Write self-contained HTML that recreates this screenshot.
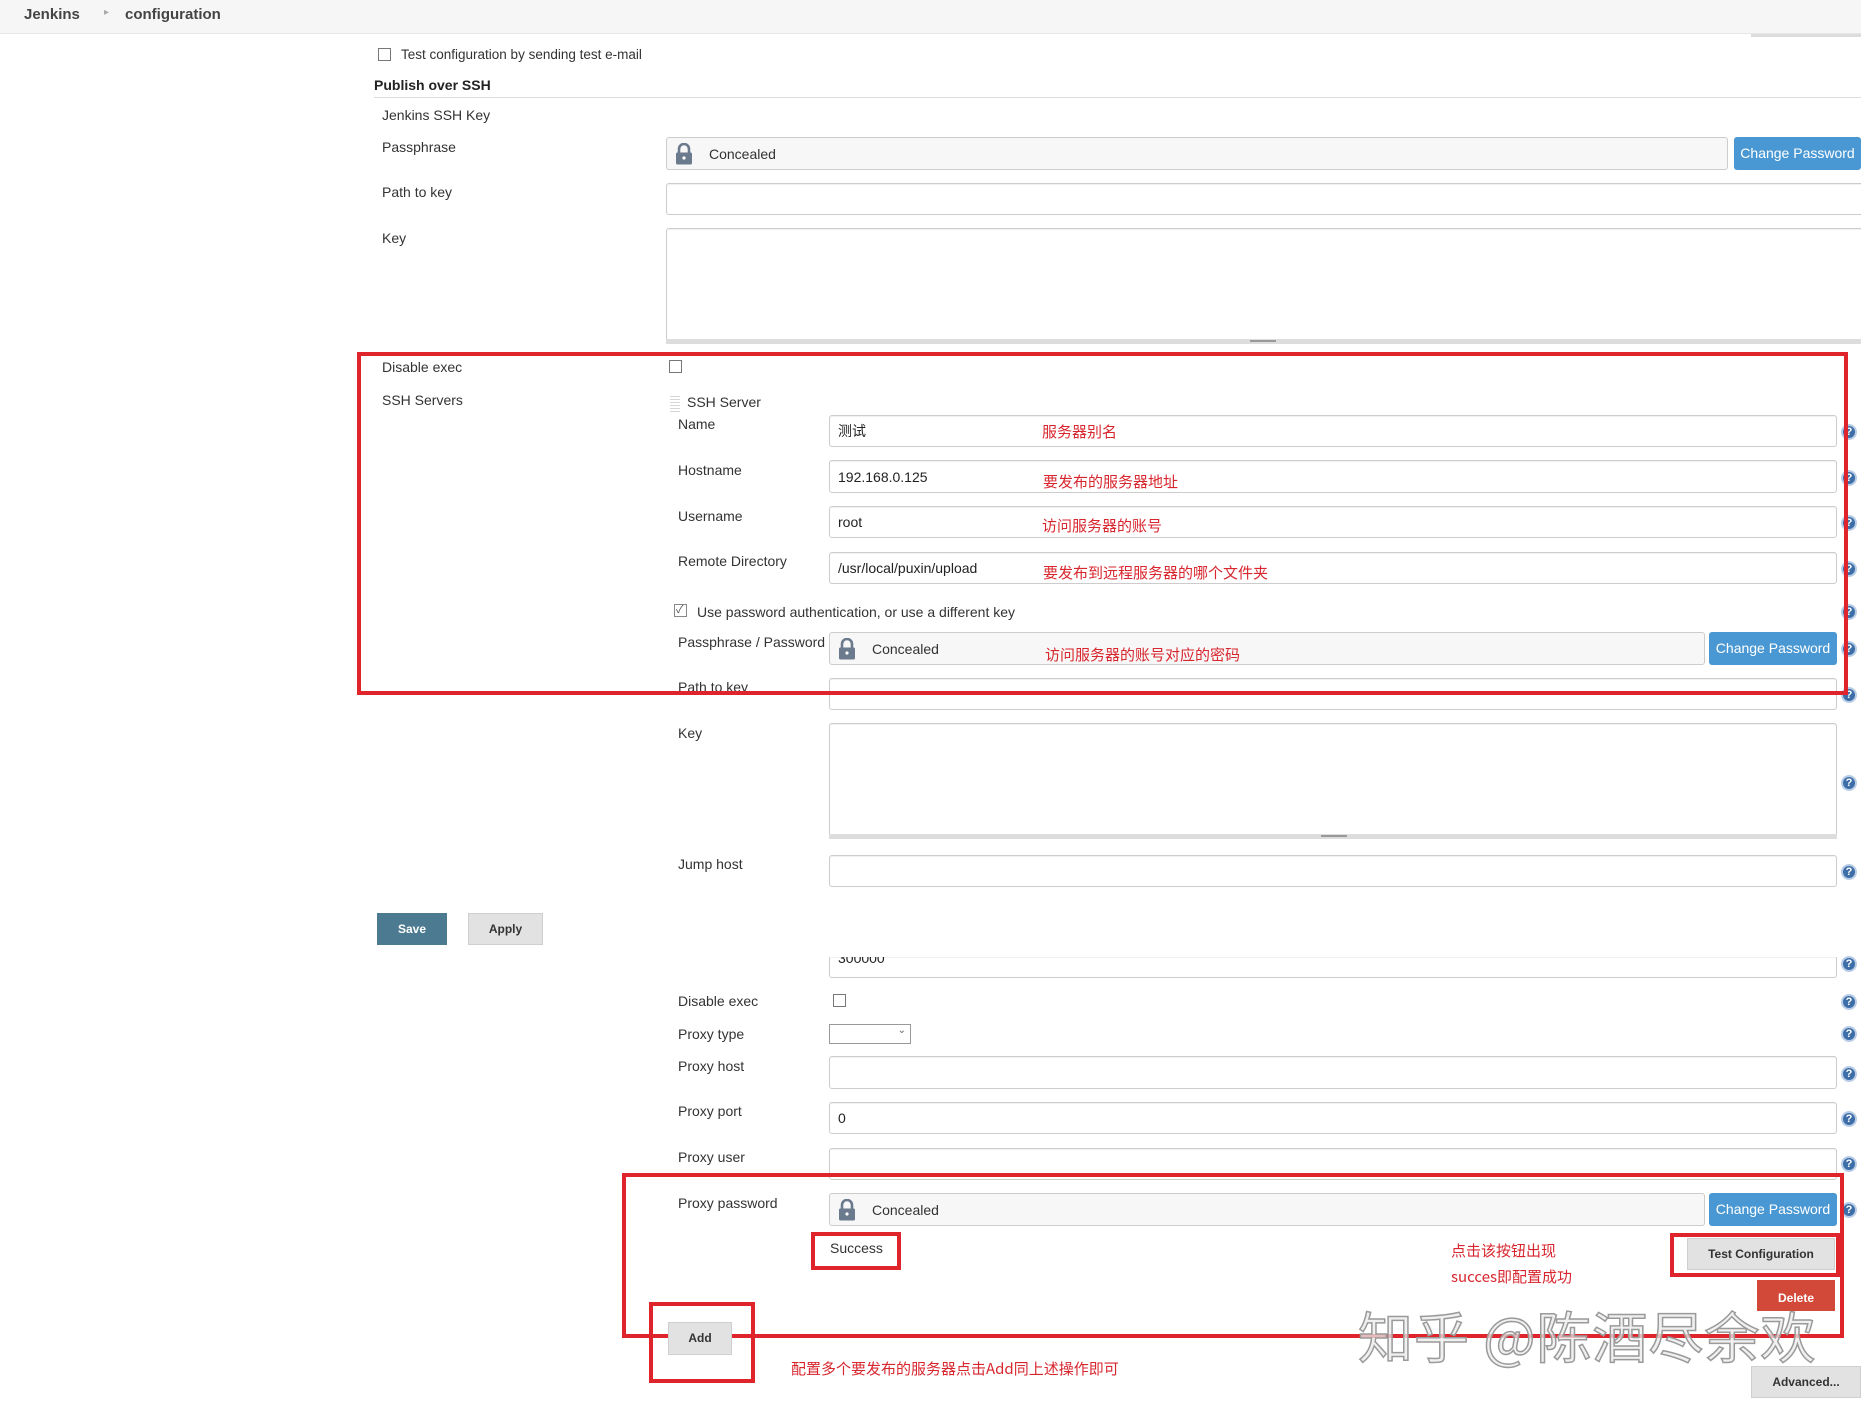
<!DOCTYPE html>
<html><head><meta charset="utf-8">
<style>
*{box-sizing:border-box;margin:0;padding:0}
body{width:1861px;height:1403px;background:#fff;position:relative;overflow:hidden;font-family:"Liberation Sans","Noto Sans CJK SC",sans-serif;font-size:14px;color:#333}
.a{position:absolute;white-space:nowrap}
.lbl{position:absolute;white-space:nowrap;font-size:14px;color:#333;line-height:16px}
.inp{position:absolute;border:1px solid #ccc;border-radius:3px;background:#fff;box-shadow:inset 0 1px 1px rgba(0,0,0,.06)}
.inp span{position:absolute;left:8px;top:50%;transform:translateY(-50%);font-size:14px;color:#222}
.conc{position:absolute;border:1px solid #ccc;border-radius:3px;background:#f7f7f7}
.conc span{position:absolute;left:42px;top:50%;transform:translateY(-50%);color:#333}
.lock{position:absolute;left:8px;top:50%;transform:translateY(-50%);width:18px;height:22px}
.cpb{position:absolute;background:#4a98d3;color:#fff;border-radius:3px;font-size:14px;text-align:center}
.cb{position:absolute;width:13px;height:13px;border:1px solid #777;background:#fff}
.help{position:absolute;width:16px;height:16px;border-radius:50%;background:#3d6ea8;border:2px solid #b9cde6;color:#fff;font-size:11px;font-weight:bold;text-align:center;line-height:12px}
.red{position:absolute;border:4px solid #e0242b}
.ann{position:absolute;white-space:nowrap;color:#d8262e;font-size:15px;font-family:"Noto Sans CJK SC","Liberation Sans",sans-serif}
.gb{position:absolute;background:#e2e2e2;border:1px solid #cfcfcf;color:#333;font-weight:bold;font-size:12px;text-align:center}
</style></head><body>
<div class="a" style="left:0;top:0;width:1861px;height:34px;background:#f6f6f6;border-bottom:1px solid #e6e6e6"></div>
<div class="a" style="left:24px;top:6px;font-weight:bold;font-size:15px;color:#444">Jenkins</div>
<div class="a" style="left:104px;top:7px;font-size:10px;color:#aaa">&#9656;</div>
<div class="a" style="left:125px;top:6px;font-weight:bold;font-size:15px;color:#444">configuration</div>
<div class="a" style="left:1751px;top:34px;width:110px;height:3px;background:#ddd"></div>

<div class="cb" style="left:378px;top:48px"></div>
<div class="lbl" style="left:401px;top:47px;font-size:13.5px">Test configuration by sending test e-mail</div>
<div class="lbl" style="left:374px;top:77px;font-weight:bold;font-size:14px;color:#222">Publish over SSH</div>
<div class="a" style="left:374px;top:97px;width:1487px;height:1px;background:#ddd"></div>
<div class="lbl" style="left:382px;top:107px">Jenkins SSH Key</div>
<div class="lbl" style="left:382px;top:139px">Passphrase</div>
<div class="lbl" style="left:382px;top:184px">Path to key</div>
<div class="lbl" style="left:382px;top:230px">Key</div>

<div class="conc" style="left:666px;top:137px;width:1062px;height:33px"><svg class="lock" viewBox="0 0 18 22"><path d="M4 10V6a5 5 0 0 1 10 0v4" fill="none" stroke="#6b7a8c" stroke-width="2.6"/><rect x="1" y="9.5" width="16" height="12" rx="1.5" fill="#6b7a8c"/><circle cx="9" cy="15" r="1.6" fill="#fff"/></svg><span>Concealed</span></div>
<div class="cpb" style="left:1734px;top:137px;width:127px;height:33px;line-height:33px">Change Password</div>
<div class="inp" style="left:666px;top:183px;width:1200px;height:32px"></div>
<div class="inp" style="left:666px;top:228px;width:1200px;height:115px"></div>
<div class="a" style="left:666px;top:339px;width:1200px;height:5px;background:#ddd"></div>
<div class="a" style="left:1250px;top:340px;width:26px;height:2px;border-top:1px solid #999;border-bottom:1px solid #999"></div>

<div class="lbl" style="left:382px;top:359px">Disable exec</div>
<div class="cb" style="left:669px;top:360px"></div>
<div class="lbl" style="left:382px;top:392px">SSH Servers</div>
<div class="a" style="left:670px;top:394px;width:10px;height:18px;background:repeating-linear-gradient(0deg,#ccc 0 1px,transparent 1px 3px),#fff;opacity:.8"></div>
<div class="lbl" style="left:687px;top:394px">SSH Server</div>

<div class="lbl" style="left:678px;top:416px">Name</div>
<div class="lbl" style="left:678px;top:462px">Hostname</div>
<div class="lbl" style="left:678px;top:508px">Username</div>
<div class="lbl" style="left:678px;top:553px">Remote Directory</div>
<div class="cb" style="left:674px;top:604px;border-color:#888"></div><div class="a" style="left:676px;top:601px;font-size:11px;color:#555">&#10003;</div>
<div class="lbl" style="left:697px;top:604px">Use password authentication, or use a different key</div>
<div class="lbl" style="left:678px;top:634px">Passphrase / Password</div>
<div class="lbl" style="left:678px;top:679px">Path to key</div>
<div class="lbl" style="left:678px;top:725px">Key</div>
<div class="lbl" style="left:678px;top:856px">Jump host</div>

<div class="inp" style="left:829px;top:415px;width:1008px;height:32px"><span>测试</span></div>
<div class="inp" style="left:829px;top:460px;width:1008px;height:33px"><span>192.168.0.125</span></div>
<div class="inp" style="left:829px;top:506px;width:1008px;height:32px"><span>root</span></div>
<div class="inp" style="left:829px;top:552px;width:1008px;height:32px"><span>/usr/local/puxin/upload</span></div>
<div class="conc" style="left:829px;top:632px;width:876px;height:33px"><svg class="lock" viewBox="0 0 18 22"><path d="M4 10V6a5 5 0 0 1 10 0v4" fill="none" stroke="#6b7a8c" stroke-width="2.6"/><rect x="1" y="9.5" width="16" height="12" rx="1.5" fill="#6b7a8c"/><circle cx="9" cy="15" r="1.6" fill="#fff"/></svg><span>Concealed</span></div>
<div class="cpb" style="left:1709px;top:632px;width:128px;height:33px;line-height:33px">Change Password</div>
<div class="inp" style="left:829px;top:678px;width:1008px;height:32px"></div>
<div class="inp" style="left:829px;top:723px;width:1008px;height:114px"></div>
<div class="a" style="left:829px;top:834px;width:1008px;height:5px;background:#ddd"></div>
<div class="a" style="left:1321px;top:835px;width:26px;height:2px;border-top:1px solid #999;border-bottom:1px solid #999"></div>
<div class="inp" style="left:829px;top:855px;width:1008px;height:32px"></div>

<div class="help" style="left:1841px;top:424px">?</div>
<div class="help" style="left:1841px;top:470px">?</div>
<div class="help" style="left:1841px;top:515px">?</div>
<div class="help" style="left:1841px;top:561px">?</div>
<div class="help" style="left:1841px;top:604px">?</div>
<div class="help" style="left:1841px;top:641px">?</div>
<div class="help" style="left:1841px;top:687px">?</div>
<div class="help" style="left:1841px;top:775px">?</div>
<div class="help" style="left:1841px;top:864px">?</div>

<div class="ann" style="left:1042px;top:421px">服务器别名</div>
<div class="ann" style="left:1043px;top:471px">要发布的服务器地址</div>
<div class="ann" style="left:1042px;top:515px">访问服务器的账号</div>
<div class="ann" style="left:1043px;top:562px">要发布到远程服务器的哪个文件夹</div>
<div class="ann" style="left:1045px;top:644px">访问服务器的账号对应的密码</div>

<div class="red" style="left:357px;top:352px;width:1491px;height:343px"></div>

<div class="a" style="left:377px;top:913px;width:70px;height:32px;background:#4b7a91;color:#fff;font-weight:bold;font-size:12px;text-align:center;line-height:32px">Save</div>
<div class="gb" style="left:468px;top:913px;width:75px;height:32px;line-height:30px">Apply</div>

<!-- second part -->
<div class="inp" style="left:829px;top:957px;width:1008px;height:21px;border-top:none;border-radius:0 0 3px 3px;overflow:hidden"><div style="position:absolute;left:8px;top:-7px;font-size:14px;color:#222">300000</div></div>
<div class="help" style="left:1841px;top:956px">?</div>
<div class="lbl" style="left:678px;top:993px">Disable exec</div>
<div class="cb" style="left:833px;top:994px"></div>
<div class="lbl" style="left:678px;top:1026px">Proxy type</div>
<div class="a" style="left:829px;top:1024px;width:82px;height:20px;border:1px solid #999;background:#fff"><span style="position:absolute;right:4px;top:0;font-size:10px;color:#666">&#8964;</span></div>
<div class="lbl" style="left:678px;top:1058px">Proxy host</div>
<div class="lbl" style="left:678px;top:1103px">Proxy port</div>
<div class="lbl" style="left:678px;top:1149px">Proxy user</div>
<div class="lbl" style="left:678px;top:1195px">Proxy password</div>
<div class="inp" style="left:829px;top:1056px;width:1008px;height:33px"></div>
<div class="inp" style="left:829px;top:1102px;width:1008px;height:32px"><span>0</span></div>
<div class="inp" style="left:829px;top:1148px;width:1008px;height:32px"></div>
<div class="conc" style="left:829px;top:1193px;width:876px;height:33px"><svg class="lock" viewBox="0 0 18 22"><path d="M4 10V6a5 5 0 0 1 10 0v4" fill="none" stroke="#6b7a8c" stroke-width="2.6"/><rect x="1" y="9.5" width="16" height="12" rx="1.5" fill="#6b7a8c"/><circle cx="9" cy="15" r="1.6" fill="#fff"/></svg><span>Concealed</span></div>
<div class="cpb" style="left:1709px;top:1193px;width:128px;height:33px;line-height:33px">Change Password</div>
<div class="help" style="left:1841px;top:994px">?</div>
<div class="help" style="left:1841px;top:1026px">?</div>
<div class="help" style="left:1841px;top:1066px">?</div>
<div class="help" style="left:1841px;top:1111px">?</div>
<div class="help" style="left:1841px;top:1156px">?</div>
<div class="help" style="left:1841px;top:1202px">?</div>

<div class="lbl" style="left:830px;top:1240px">Success</div>
<div class="red" style="left:811px;top:1232px;width:90px;height:38px"></div>
<div class="ann" style="left:1451px;top:1240px">点击该按钮出现</div>
<div class="ann" style="left:1451px;top:1266px">succes即配置成功</div>
<div class="gb" style="left:1687px;top:1238px;width:148px;height:32px;line-height:30px">Test Configuration</div>
<div class="red" style="left:1670px;top:1233px;width:170px;height:44px"></div>
<div class="a" style="left:1757px;top:1280px;width:78px;height:31px;background:#d24939;color:#fff;font-weight:bold;font-size:12px;text-align:center;line-height:36px">Delete</div>

<div class="red" style="left:622px;top:1173px;width:1222px;height:165px"></div>
<div class="gb" style="left:668px;top:1322px;width:64px;height:33px;line-height:30px">Add</div>
<div class="red" style="left:649px;top:1302px;width:106px;height:81px"></div>
<div class="ann" style="left:791px;top:1358px">配置多个要发布的服务器点击Add同上述操作即可</div>
<div class="gb" style="left:1751px;top:1366px;width:110px;height:32px;line-height:30px">Advanced...</div>

<div class="a" style="left:1358px;top:1294px;font-size:55px;color:rgba(235,235,235,.75);-webkit-text-stroke:1.5px #9a9a9a;font-family:'Noto Sans CJK SC','Liberation Sans',sans-serif;letter-spacing:1px">知乎 @陈酒尽余欢</div>
</body></html>
